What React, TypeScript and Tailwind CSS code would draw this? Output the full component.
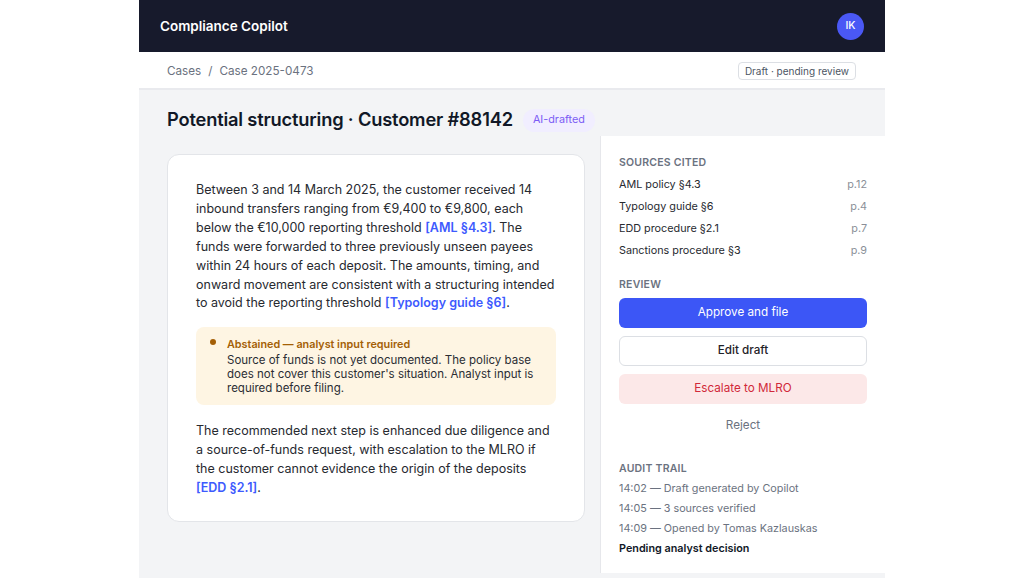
import React from "react";

interface Source {
  name: string;
  page: string;
}

const sources: Source[] = [
  { name: "AML policy §4.3", page: "p.12" },
  { name: "Typology guide §6", page: "p.4" },
  { name: "EDD procedure §2.1", page: "p.7" },
  { name: "Sanctions procedure §3", page: "p.9" },
];

const audit = [
  "14:02 — Draft generated by Copilot",
  "14:05 — 3 sources verified",
  "14:09 — Opened by Tomas Kazlauskas",
];

const Cite = ({ children }: { children: React.ReactNode }) => (
  <span className="font-semibold text-[#3d5afe]">{children}</span>
);

const SectionLabel = ({ children }: { children: React.ReactNode }) => (
  <h4 className="text-[10.5px] font-semibold uppercase tracking-[0.02em] text-[#6b7280] leading-[14px]">
    {children}
  </h4>
);

export default function App() {
  return (
    <div
      className="w-[746px] mx-auto bg-[#f3f4f6] text-[#1f2937]"
      style={{ fontFamily: "Inter, 'Noto Sans', sans-serif" }}
    >
      {/* Top bar */}
      <header className="h-[52px] bg-[#171a2c] flex items-center justify-between px-[21px]">
        <span className="text-white text-[13.5px] font-semibold">Compliance Copilot</span>
        <div className="w-[27px] h-[27px] rounded-full bg-[#4a58f5] text-white text-[10.5px] font-medium flex items-center justify-center">
          IK
        </div>
      </header>

      {/* Breadcrumb */}
      <div className="h-[38px] bg-white border-b-2 border-[#e9eaee] flex items-center justify-between pl-[28px] pr-[29px] pt-[3px]">
        <div className="text-[11.7px] text-[#6b7280] flex gap-[7px]">
          <span>Cases</span>
          <span>/</span>
          <span>Case 2025-0473</span>
        </div>
        <span className="text-[10px] text-[#4b5563] border border-[#dcdfe4] rounded px-[6px] py-[1px] leading-[14px] -mt-[1px]">
          Draft · pending review
        </span>
      </div>

      <div className="flex">
        {/* Main column */}
        <main className="w-[461px] pl-[28px] pr-[15px] pt-[18px] pb-[56px]">
          <div className="flex items-center gap-[10px] h-[24px] whitespace-nowrap">
            <h1 className="text-[18.3px] font-semibold text-[#111827] tracking-[-0.01em]">
              Potential structuring · Customer #88142
            </h1>
            <span className="text-[10.8px] text-[#7c5cf5] bg-[#f1eeff] rounded-full px-[10px] h-[23px] flex items-center">
              AI-drafted
            </span>
          </div>

          <div className="mt-[22px] bg-white border border-[#e3e5e9] rounded-xl px-[28px] pt-[26px] pb-[23px]">
            <p className="text-[12.5px] leading-[18.9px] text-[#272a30]">
              Between 3 and 14 March 2025, the customer received 14 inbound transfers ranging from
              €9,400 to €9,800, each below the €10,000 reporting threshold <Cite>[AML §4.3]</Cite>.
              The funds were forwarded to three previously unseen payees within 24 hours of each
              deposit. The amounts, timing, and onward movement are consistent with a structuring
              intended to avoid the reporting threshold <Cite>[Typology guide §6]</Cite>.
            </p>

            <div className="mt-[14px] bg-[#fef5e3] rounded-lg flex gap-[11px] pl-[14px] pr-[12px] pt-[10px] pb-[10px]">
              <div className="w-[6px] h-[6px] rounded-full bg-[#a45f06] mt-[2px] shrink-0" />
              <div>
                <div className="text-[10.8px] font-semibold text-[#a45f06] leading-[16px]">
                  Abstained — analyst input required
                </div>
                <p className="text-[11.5px] leading-[14px] text-[#2b2d33]">
                  Source of funds is not yet documented. The policy base does not cover this
                  customer's situation. Analyst input is required before filing.
                </p>
              </div>
            </div>

            <p className="mt-[17px] text-[12.5px] leading-[18.9px] text-[#272a30]">
              The recommended next step is enhanced due diligence and a source-of-funds request,
              with escalation to the MLRO if the customer cannot evidence the origin of the deposits{" "}
              <Cite>[EDD §2.1]</Cite>.
            </p>
          </div>
        </main>

        {/* Sidebar */}
        <aside className="w-[285px] mt-[46px] mb-[5px] bg-white border-l border-[#e6e7eb] px-[18px] pt-[20px] pb-[14px]">
          <SectionLabel>Sources cited</SectionLabel>
          <ul className="mt-[4px]">
            {sources.map((s) => (
              <li key={s.name} className="flex justify-between h-[22px] items-center text-[10.8px]">
                <span className="text-[#272a30]">{s.name}</span>
                <span className="text-[#8a8f98]">{s.page}</span>
              </li>
            ))}
          </ul>

          <div className="mt-[16px]">
            <SectionLabel>Review</SectionLabel>
          </div>
          <div className="mt-[6px] flex flex-col gap-[8px]">
            <button className="h-[30px] rounded-md bg-[#3c56f6] text-white text-[11.7px]">
              Approve and file
            </button>
            <button className="h-[30px] rounded-md bg-white border border-[#dcdfe4] text-[#1f2228] text-[11.7px] font-medium">
              Edit draft
            </button>
            <button className="h-[30px] rounded-md bg-[#fce8e8] text-[#d1293a] text-[11.7px]">
              Escalate to MLRO
            </button>
            <button className="h-[28px] text-[#6b7280] text-[11.7px]">Reject</button>
          </div>

          <div className="mt-[22px]">
            <SectionLabel>Audit trail</SectionLabel>
          </div>
          <ul className="mt-[3px] text-[10.8px]">
            {audit.map((a) => (
              <li key={a} className="h-[20px] flex items-center text-[#6b7280]">
                {a}
              </li>
            ))}
            <li className="h-[20px] flex items-center font-semibold text-[#111827]">
              Pending analyst decision
            </li>
          </ul>
        </aside>
      </div>
    </div>
  );
}
